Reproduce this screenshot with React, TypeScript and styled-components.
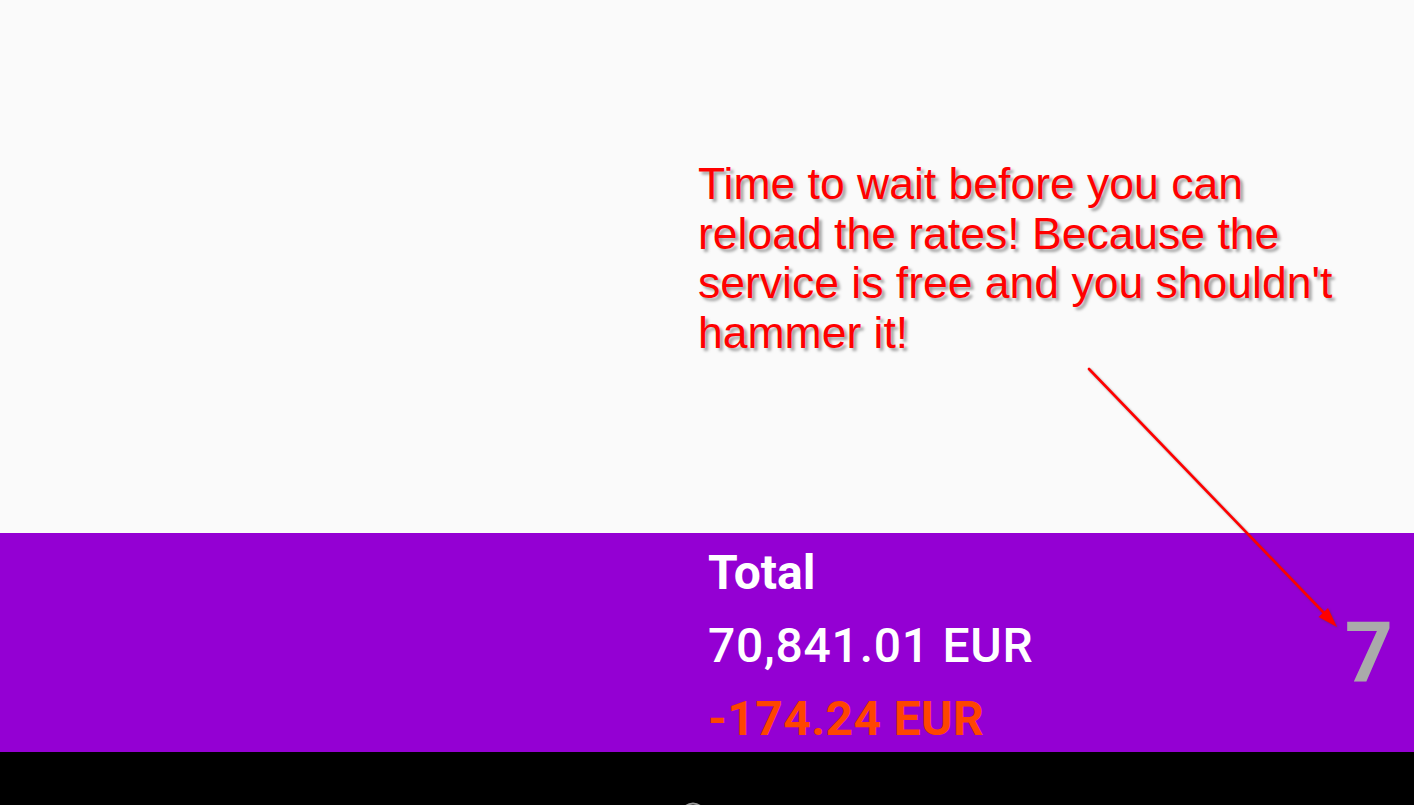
import React from "react";
import styled, { createGlobalStyle } from "styled-components";

const GlobalStyle = createGlobalStyle`
  html, body {
    margin: 0;
    padding: 0;
    background: #fafafa;
  }
  #root {
    width: 1414px;
    height: 805px;
  }
`;

const Screen = styled.div`
  position: relative;
  width: 1414px;
  height: 805px;
  display: flex;
  flex-direction: column;
  overflow: hidden;
  background: #fafafa;
`;

const Content = styled.div`
  height: 533px;
  flex: none;
  box-sizing: border-box;
  padding: 159px 0 0 698px;
  background: #fafafa;
`;

const Note = styled.p`
  margin: 0;
  width: 680px;
  font-family: "Liberation Sans", Arial, sans-serif;
  font-size: 44.5px;
  line-height: 49.5px;
  color: #ff0000;
  text-shadow: 3px 3px 3px rgba(0, 0, 0, 0.35);
`;

const TotalBar = styled.div`
  height: 219px;
  flex: none;
  display: grid;
  grid-template-columns: 1fr 1fr;
  background: #9400d3;
  overflow: hidden;
`;

const Summary = styled.div`
  display: flex;
  justify-content: space-between;
  align-items: flex-start;
  padding-left: 1px;
`;

const Figures = styled.div`
  display: flex;
  flex-direction: column;
  padding-top: 3px;
  font-family: Roboto, "Noto Sans", sans-serif;
  font-size: 48px;
  line-height: 73px;
`;

const Figure = styled.div<{ $tone?: "white" | "loss"; $weight?: number; $spacing?: number }>`
  color: ${(p) => (p.$tone === "loss" ? "#ff4500" : "#ffffff")};
  font-weight: ${(p) => p.$weight ?? 700};
  letter-spacing: ${(p) => p.$spacing ?? 0}px;
  white-space: nowrap;
`;

const Countdown = styled.div`
  margin-top: 78px;
  padding-right: 21px;
  font-family: Roboto, "Noto Sans", sans-serif;
  font-size: 84px;
  line-height: 84px;
  font-weight: 700;
  color: #aaaaaa;
`;

const NavBar = styled.div`
  flex: 1;
  display: flex;
  align-items: flex-start;
  padding: 50px 0 0 680px;
  background: #000000;
  overflow: hidden;
`;

const Overlay = styled.svg`
  position: absolute;
  left: 0;
  top: 0;
  pointer-events: none;
  filter: drop-shadow(1px 1px 1px rgba(60, 60, 60, 0.45));
`;

export default function App() {
  return (
    <>
      <GlobalStyle />
      <Screen>
        <Content>
          <Note>
            Time to wait before you can
            <br />
            reload the rates! Because the
            <br />
            service is free and you shouldn't
            <br />
            hammer it!
          </Note>
        </Content>
        <TotalBar>
          <div />
          <Summary>
            <Figures>
              <Figure $weight={700}>Total</Figure>
              <Figure $weight={500} $spacing={0.75}>
                70,841.01 EUR
              </Figure>
              <Figure $tone="loss" $weight={700} $spacing={0.4}>
                -174.24 EUR
              </Figure>
            </Figures>
            <Countdown>7</Countdown>
          </Summary>
        </TotalBar>
        <NavBar>
          <svg width="26" height="26" viewBox="0 0 26 26">
            <circle cx="13" cy="13" r="11.5" fill="none" stroke="#9a9a9a" strokeWidth="2" />
          </svg>
        </NavBar>
        <Overlay width="1414" height="805" viewBox="0 0 1414 805">
          <line x1="1089" y1="369" x2="1325" y2="614" stroke="#ff0000" strokeWidth="2.6" strokeLinecap="round" />
          <polygon points="1337,627 1318.5,617 1328,608" fill="#ff0000" />
        </Overlay>
      </Screen>
    </>
  );
}
